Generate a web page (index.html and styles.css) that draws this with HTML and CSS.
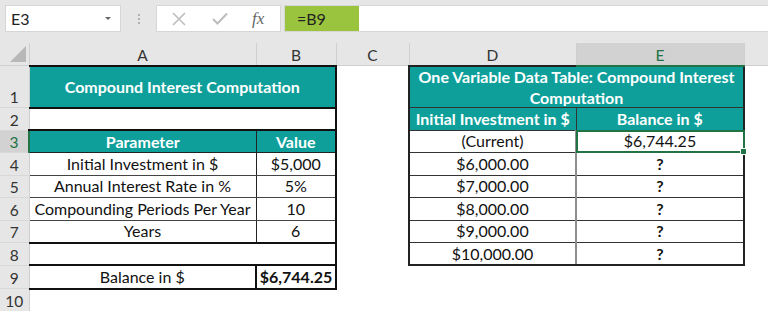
FILE: index.html
```html
<!DOCTYPE html>
<html>
<head>
<meta charset="utf-8">
<link rel="stylesheet" href="styles.css">
</head>
<body>
<div class="fbar">
  <div class="namebox"><span>E3</span><span class="caret"></span></div>
  <div class="dots"><i></i><i></i><i></i></div>
  <div class="fbtns">
    <svg class="ic-x" width="14" height="14" viewBox="0 0 14 14"><path d="M1 1L13 13M13 1L1 13" stroke="#bdbdbd" stroke-width="1.6" fill="none"/></svg>
    <svg class="ic-ok" width="16" height="13" viewBox="0 0 16 13"><path d="M1 7L5.5 11.5L15 1.5" stroke="#bdbdbd" stroke-width="2" fill="none"/></svg>
    <span class="fx">fx</span>
  </div>
  <div class="finput"><div class="fgreen">=B9</div></div>
</div>
<table class="sheet">
  <colgroup>
    <col class="w-rh"><col class="w-a"><col class="w-b"><col class="w-c"><col class="w-d"><col class="w-e"><col>
  </colgroup>
  <tr class="hdr">
    <th class="corner"><svg width="29" height="22" viewBox="0 0 29 22"><path d="M10 19H26V3Z" fill="#b8b8b8"/></svg></th>
    <th>A</th><th>B</th><th>C</th><th>D</th><th class="sel">E</th><th class="last"></th>
  </tr>
  <tr class="r1">
    <td class="rh">1</td>
    <td colspan="2" class="t L1">Compound Interest Computation</td>
    <td></td>
    <td colspan="2" class="t R1"><div class="wrap">One Variable Data Table: Compound Interest<br>Computation</div></td>
    <td></td>
  </tr>
  <tr class="r">
    <td class="rh">2</td>
    <td colspan="2" class="L2"></td>
    <td></td>
    <td class="t RdH">Initial Investment in $</td>
    <td class="t ReH">Balance in $</td>
    <td></td>
  </tr>
  <tr class="r">
    <td class="rh rsel">3</td>
    <td class="t LaH">Parameter</td>
    <td class="t LbH">Value</td>
    <td></td>
    <td class="c Rd">(Current)</td>
    <td class="c Re cur"><span>$6,744.25</span></td>
    <td></td>
  </tr>
  <tr class="r">
    <td class="rh">4</td>
    <td class="c La">Initial Investment in $</td>
    <td class="c Lb">$5,000</td>
    <td></td>
    <td class="c Rd">$6,000.00</td>
    <td class="c Re b">?</td>
    <td></td>
  </tr>
  <tr class="r">
    <td class="rh">5</td>
    <td class="c La">Annual Interest Rate in %</td>
    <td class="c Lb">5%</td>
    <td></td>
    <td class="c Rd">$7,000.00</td>
    <td class="c Re b">?</td>
    <td></td>
  </tr>
  <tr class="r">
    <td class="rh">6</td>
    <td class="c La">Compounding Periods Per Year</td>
    <td class="c Lb">10</td>
    <td></td>
    <td class="c Rd">$8,000.00</td>
    <td class="c Re b">?</td>
    <td></td>
  </tr>
  <tr class="r">
    <td class="rh">7</td>
    <td class="c La Lbot">Years</td>
    <td class="c Lb Lbot">6</td>
    <td></td>
    <td class="c Rd">$9,000.00</td>
    <td class="c Re b">?</td>
    <td></td>
  </tr>
  <tr class="r">
    <td class="rh">8</td>
    <td colspan="2" class="L8"></td>
    <td></td>
    <td class="c Rd Rbot">$10,000.00</td>
    <td class="c Re b Rbot">?</td>
    <td></td>
  </tr>
  <tr class="r r9">
    <td class="rh">9</td>
    <td class="c La9">Balance in $</td>
    <td class="c Lb9 b">$6,744.25</td>
    <td></td><td></td><td></td><td></td>
  </tr>
  <tr class="r">
    <td class="rh">10</td>
    <td></td><td></td><td></td><td></td><td></td><td></td>
  </tr>
</table>
</body>
</html>
```

FILE: styles.css
```css
* { box-sizing: border-box; }
html, body { margin: 0; padding: 0; }
body {
  width: 768px;
  height: 311px;
  overflow: hidden;
  background: #ffffff;
  font-family: Lato, "Liberation Sans", sans-serif;
  color: #111;
}

/* formula bar */
.fbar {
  height: 43px;
  background: #e6e6e6;
  display: flex;
  align-items: flex-start;
  padding-top: 5px;
}
.namebox {
  margin-left: 5px;
  width: 116px;
  height: 27px;
  background: #fff;
  border: 1px solid #d6d6d6;
  display: flex;
  align-items: center;
  justify-content: space-between;
  padding: 0 9px 0 5px;
  font-size: 16px;
  color: #222;
}
.caret {
  width: 0; height: 0;
  border-left: 3px solid transparent;
  border-right: 3px solid transparent;
  border-top: 3px solid #666;
}
.dots {
  width: 35px;
  height: 27px;
  display: flex;
  flex-direction: column;
  align-items: center;
  justify-content: center;
  gap: 2px;
}
.dots i {
  display: block;
  width: 2px; height: 2px;
  background: #b0b0b0;
}
.fbtns {
  width: 125px;
  height: 27px;
  background: #fff;
  border: 1px solid #d6d6d6;
  display: flex;
  align-items: center;
  padding-left: 15px;
}
.ic-x { margin-right: 26px; }
.ic-ok { margin-right: 24px; }
.fx {
  font-family: "Liberation Serif", serif;
  font-style: italic;
  font-size: 17px;
  color: #666;
}
.finput {
  margin-left: 3px;
  flex: 1;
  height: 27px;
  background: #fff;
  border: 1px solid #d6d6d6;
  border-right: none;
}
.fgreen {
  width: 74px;
  height: 25px;
  background: #9bc43e;
  font-size: 16px;
  color: #222;
  padding-left: 12px;
  line-height: 25px;
}

/* sheet */
.sheet {
  border-collapse: collapse;
  table-layout: fixed;
  width: 768px;
}
.w-rh { width: 29px; }
.w-a { width: 227px; }
.w-b { width: 80px; }
.w-c { width: 73px; }
.w-d { width: 167px; }
.w-e { width: 168px; }

.sheet td, .sheet th {
  padding: 0;
  font-size: 16px;
  line-height: 18px;
  white-space: nowrap;
  overflow: visible;
}
.hdr th {
  height: 22px;
  background: #e6e6e6;
  border-left: 1px solid #cfcfcf;
  font-weight: normal;
  font-size: 15.5px;
  color: #333;
  text-align: center;
  vertical-align: bottom;
  line-height: 20px;
  border-bottom: 1px solid #d0d0d0;
}
.hdr th.corner { border-left: none; vertical-align: top; line-height: 0; border-right: 1px solid #cfcfcf; }
.hdr th.corner svg { display: block; }
.hdr th.sel {
  background: #d2d2d2;
  color: #217346;
  border-bottom: 2px solid #217346;
}
.hdr th.last { border-left: 1px solid #cfcfcf; }

.r1 td { height: 42px; }
.r td { height: 22.5px; }
.r9 td { height: 23.5px; }

.rh {
  background: #e6e6e6;
  border-right: 1px solid #cfcfcf;
  border-bottom: 1px solid #d8d8d8;
  color: #333;
  text-align: center;
  vertical-align: bottom;
}
.sheet td.rh { font-size: 15.5px; line-height: 20px; }
.rh.rsel {
  background: #d2d2d2;
  color: #217346;
  border-right: 2px solid #217346;
}

.t {
  background: #0e9f9b;
  color: #fff;
  font-weight: bold;
  text-align: center;
  vertical-align: middle;
}
.c {
  text-align: center;
  vertical-align: middle;
  color: #111;
}
.b { font-weight: bold; }

/* left table */
.L1 { border: 2px solid #111; border-left: 1px solid #333; }
.L2 { border-right: 2px solid #111; border-bottom: 2px solid #111; border-left: 1px solid #333; }
.LaH { border-right: 1px solid #222; border-bottom: 1px solid #222; border-left: 1px solid #333; }
.LbH { border-right: 2px solid #111; border-bottom: 1px solid #222; }
.La { border-right: 1px solid #222; border-bottom: 1px solid #444; border-left: 1px solid #333; }
.Lb { border-right: 2px solid #111; border-bottom: 1px solid #444; }
.Lbot { border-bottom: 2px solid #111; }
.L8 { border-right: 2px solid #111; border-bottom: 2px solid #111; border-left: 1px solid #333; }
.La9 { border-right: 2px solid #111; border-bottom: 2px solid #111; border-left: 1px solid #333; }
.Lb9 { border-right: 2px solid #111; border-bottom: 2px solid #111; }

/* right table */
.R1 {
  border: 2px solid #222;
  border-bottom: 1px solid #333;
  white-space: normal;
}
.wrap {
  height: 40px;
  overflow: hidden;
  line-height: 21px;
  margin-top: -1px;
}
.RdH { border-left: 2px solid #222; border-right: 1px solid #333; border-bottom: 1px solid #333; }
.ReH { border-right: 2px solid #222; border-bottom: 1px solid #333; }
.Rd { border-left: 2px solid #222; border-right: 2px solid #8e8e8e; border-bottom: 1px solid #333; }
.Re { border-right: 2px solid #222; border-bottom: 1px solid #333; }
.Rbot { border-bottom: 2px solid #222; }

.cur { position: relative; }
.cur::before {
  content: "";
  position: absolute;
  left: -1px; top: -1px; right: -2px; bottom: -1px;
  border: 2px solid #217346;
}
.cur::after {
  content: "";
  position: absolute;
  right: -4px; bottom: -3px;
  width: 5px; height: 5px;
  background: #217346;
  border: 1px solid #fff;
}
```
